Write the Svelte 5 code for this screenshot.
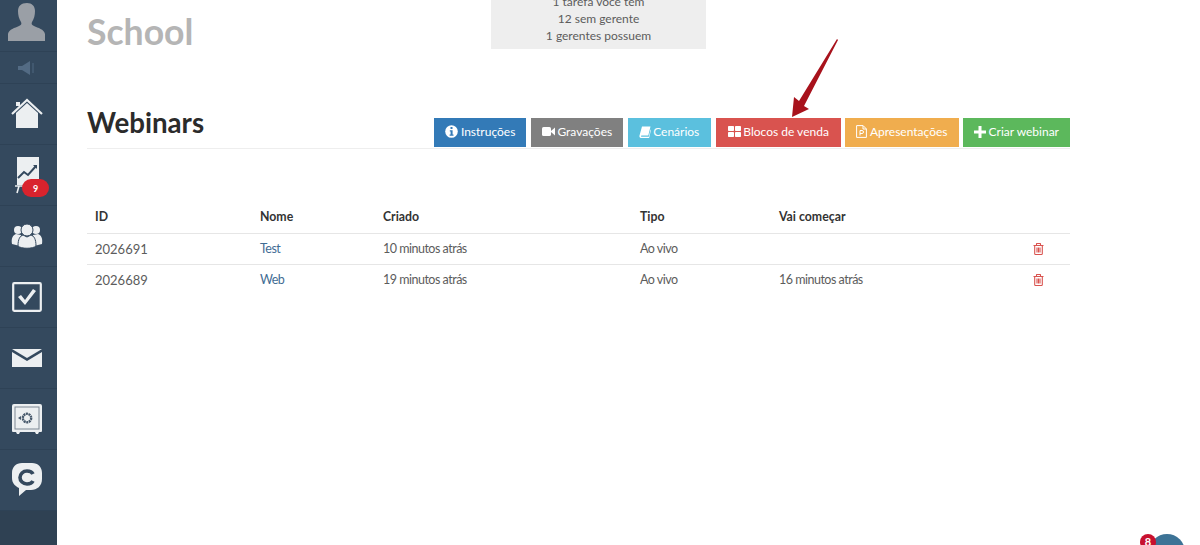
<script>
  const buttons = [
    { label: 'Instruções', cls: 'blue', icon: 'info' },
    { label: 'Gravações', cls: 'grey', icon: 'video' },
    { label: 'Cenários', cls: 'cyan', icon: 'book' },
    { label: 'Blocos de venda', cls: 'red', icon: 'grid' },
    { label: 'Apresentações', cls: 'orange', icon: 'file' },
    { label: 'Criar webinar', cls: 'green', icon: 'plus' }
  ];

  const rows = [
    { id: '2026691', name: 'Test', created: '10 minutos atrás', type: 'Ao vivo', start: '' },
    { id: '2026689', name: 'Web', created: '19 minutos atrás', type: 'Ao vivo', start: '16 minutos atrás' }
  ];
</script>

<div class="page">
  <aside class="sidebar">
    <div class="nav-item avatar">
      <svg width="40" height="40" viewBox="0 0 40 40" fill="#9a9fa6">
        <path d="M20 2c5 0 8 3 8 8 0 4-1 8-3 11-1 2 0 3 2 4 4 2 10 3 11 8v7H1v-7c1-5 7-6 11-8 2-1 3-2 2-4-2-3-3-7-3-11 0-5 3-8 9-8z" />
      </svg>
    </div>
    <div class="nav-item sound">
      <svg width="20" height="14" viewBox="0 0 20 14" fill="#536b84">
        <path d="M1 5h4l8-5v14l-8-5H1z" />
        <rect x="15" y="2" width="2" height="10" opacity="0.45" />
      </svg>
    </div>
    <div class="nav-item">
      <svg width="32" height="32" viewBox="0 0 32 32">
        <path d="M5 15 16 5l11 10v15H5z" fill="#eceff1" />
        <path d="M1 16 16 2l15 14" fill="none" stroke="#eceff1" stroke-width="2.2" />
        <path d="M5 4h4v4H5z" fill="#eceff1" />
      </svg>
    </div>
    <div class="nav-item chart">
      <svg width="26" height="38" viewBox="0 0 26 38">
        <path d="M3 1h22v28H3z" fill="#eceff1" />
        <path d="M4 22l6-6 4 3 8-9" fill="none" stroke="#34495e" stroke-width="2" />
        <path d="M19 9h4v4z" fill="#34495e" />
        <path d="M1 30h8M5 30l-2 7" stroke="#eceff1" stroke-width="1.6" fill="none" />
      </svg>
      <span class="badge">9</span>
    </div>
    <div class="nav-item">
      <svg width="32" height="28" viewBox="0 0 32 28" fill="#eceff1">
        <circle cx="7" cy="8" r="4" />
        <circle cx="25" cy="8" r="4" />
        <path d="M1 22c-1-6 1-9 4-10l5 1-1 11zM31 22c1-6-1-9-4-10l-5 1 1 11z" />
        <circle cx="16" cy="8" r="6" stroke="#34495e" />
        <path d="M7 24c0-7 2-10 5-11l4 2 4-2c3 1 5 4 5 11-3 3-15 3-18 0z" stroke="#34495e" />
      </svg>
    </div>
    <div class="nav-item">
      <svg width="30" height="30" viewBox="0 0 30 30">
        <rect x="1.2" y="1.2" width="27.6" height="27.6" rx="1" fill="none" stroke="#eceff1" stroke-width="2.2" />
        <path d="M6 15l3-2 4 5 8-11 3 2-11 14z" fill="#eceff1" />
      </svg>
    </div>
    <div class="nav-item">
      <svg width="30" height="18" viewBox="0 0 30 18" fill="#eceff1">
        <path d="M0 0h30L15 9z" />
        <path d="M0 3l15 9 15-9v15H0z" />
      </svg>
    </div>
    <div class="nav-item">
      <svg width="30" height="30" viewBox="0 0 30 30">
        <path d="M2 0h26a2 2 0 0 1 2 2v25a1 1 0 0 1-1 1h-2l-1 2h-2l-1-2H8l-1 2H5l-1-2H1a1 1 0 0 1-1-1V2a2 2 0 0 1 2-2z" fill="#eceff1" />
        <rect x="3" y="3" width="24" height="22" fill="none" stroke="#7c8894" stroke-width="1" />
        <circle cx="15" cy="14" r="4.2" fill="none" stroke="#46586b" stroke-width="2.4" stroke-dasharray="2 0.6" />
        <path d="M6 14l3-2v4z" fill="#46586b" />
      </svg>
    </div>
    <div class="nav-item">
      <svg width="30" height="34" viewBox="0 0 30 34">
        <path d="M10 0h10c6 0 10 4 10 10v6c0 7-5 11-11 11h-5l-7 6 0-8c-4-2-7-5-7-10v-5C0 4 4 0 10 0z" fill="#eceff1" />
        <path d="M21 11c-1-2-3-3-6-3-4 0-7 3-7 6.500s3 6.500 7 6.500c3 0 5-1 6-3" fill="none" stroke="#34495e" stroke-width="3.600" />
      </svg>
    </div>
    <div class="sidebar-foot"></div>
  </aside>

  <main class="content">
    <div class="top">
      <h1 class="school">School</h1>
      <div class="notice">
        <span>1 tarefa você tem</span>
        <span>12 sem gerente</span>
        <span>1 gerentes possuem</span>
      </div>
    </div>

    <div class="heading">
      <h2>Webinars</h2>
      <div class="actions">
        {#each buttons as b}
          <button class="btn {b.cls}">
            {#if b.icon === 'info'}
              <svg width="13" height="13" viewBox="0 0 13 13"><circle cx="6.500" cy="6.500" r="6.300" fill="#fff" /><path d="M5.500 2h2v2h-2zM4.800 5.200h2.800v4.300h.9v1.300H4.600V9.500h1V6.500h-.8z" fill="#337ab7" /></svg>
            {:else if b.icon === 'video'}
              <svg width="13" height="11" viewBox="0 0 13 11" fill="#fff"><rect x="0" y="1" width="9" height="9" rx="1.600" /><path d="M9 5l4-3.500v8L9 6z" /></svg>
            {:else if b.icon === 'book'}
              <svg width="12" height="12" viewBox="0 0 12 12" fill="#fff"><path d="M3 .5h8.500L9.300 9.500H2.600c-.8 0-.9 1.300 0 1.300h7.200l1.800-7.300.4.400-1.900 8H2C.5 11.900.2 10.600.5 9.500z" /></svg>
            {:else if b.icon === 'grid'}
              <svg width="13" height="11" viewBox="0 0 13 11" fill="#fff"><rect width="6" height="5" rx=".7" /><rect x="7" width="6" height="5" rx=".7" /><rect y="6" width="6" height="5" rx=".7" /><rect x="7" y="6" width="6" height="5" rx=".7" /></svg>
            {:else if b.icon === 'file'}
              <svg width="11" height="13" viewBox="0 0 11 13" fill="none" stroke="#fff"><path d="M.6.600h6.500l3.300 3.300v8.500H.6z" /><path d="M7 .8v3.200h3.200" /><path d="M4 10.500V5.500h2a1.500 1.500 0 0 1 0 3H4" /></svg>
            {:else}
              <svg width="12" height="12" viewBox="0 0 12 12" fill="#fff"><path d="M4.500 0h3v4.500H12v3H7.500V12h-3V7.500H0v-3h4.500z" /></svg>
            {/if}
            {b.label}
          </button>
        {/each}
      </div>
    </div>

    <div class="table">
      <div class="row head">
        <div>ID</div>
        <div>Nome</div>
        <div>Criado</div>
        <div>Tipo</div>
        <div>Vai começar</div>
        <div></div>
      </div>
      {#each rows as r}
        <div class="row">
          <div class="num">{r.id}</div>
          <div class="link">{r.name}</div>
          <div>{r.created}</div>
          <div>{r.type}</div>
          <div>{r.start}</div>
          <div class="trash">
            <svg width="11" height="12" viewBox="0 0 11 12" fill="none" stroke="#d9534f" stroke-width="1.100">
              <path d="M.5 2.500h10M3.500 2.500V1a.5.500 0 0 1 .5-.5h3a.5.500 0 0 1 .5.500v1.500M1.700 2.500v8.200c0 .4.300.8.800.8h6c.5 0 .8-.4.800-.8V2.500M4 4.500v5M5.500 4.500v5M7 4.500v5" />
            </svg>
          </div>
        </div>
      {/each}
    </div>
  </main>

  <svg class="arrow" width="60" height="90" viewBox="0 0 60 90">
    <path d="M50 2 51 3 17 69 22 72 5 80 7 60 12 64z" fill="#a8121c" />
  </svg>

  <div class="chat">
    <span class="chat-badge">8</span>
  </div>
</div>

<style>
  :global(body) {
    margin: 0;
    background: #fff;
  }

  .page {
    position: relative;
    display: flex;
    height: 545px;
    overflow: hidden;
    font-family: Lato, "Open Sans", sans-serif;
    font-size: 12.5px;
    letter-spacing: -0.5px;
    color: #5c5c5c;
  }

  .sidebar {
    width: 57px;
    flex-shrink: 0;
    display: flex;
    flex-direction: column;
    background: #34495e;
  }

  .nav-item {
    position: relative;
    flex-shrink: 0;
    display: flex;
    align-items: center;
    justify-content: center;
    border-bottom: 1px solid #2e4256;
    box-sizing: border-box;
    height: 61px;
    padding-right: 3px;
  }

  .avatar {
    height: 52px;
    align-items: flex-start;
    padding-top: 1px;
  }

  .sound {
    height: 32px;
  }

  .badge {
    position: absolute;
    left: 22px;
    top: 34px;
    width: 27px;
    height: 18px;
    border-radius: 9px;
    background: #d9232d;
    color: #fff;
    font-size: 9px;
    font-weight: 700;
    letter-spacing: 0;
    display: flex;
    align-items: center;
    justify-content: center;
  }

  .sidebar-foot {
    flex: 1;
    background: #2f4153;
  }

  .content {
    width: 983px;
    margin-left: 30px;
  }

  .top {
    display: grid;
    grid-template-columns: 404px 215px;
    height: 104px;
  }

  .school {
    margin: 12px 0 0;
    font-size: 35.6px;
    line-height: 40px;
    font-weight: 700;
    letter-spacing: 0;
    color: #b5b5b5;
  }

  .notice {
    height: 49px;
    background: #eeeeee;
    display: flex;
    flex-direction: column;
    justify-content: flex-end;
    align-items: center;
    padding-bottom: 5px;
    box-sizing: border-box;
    overflow: hidden;
    font-size: 12px;
    line-height: 17px;
    letter-spacing: 0;
  }

  .heading {
    display: flex;
    justify-content: space-between;
    align-items: flex-end;
    height: 44px;
    border-bottom: 1px solid #eee;
  }

  h2 {
    margin: 0 0 7px;
    font-size: 27.7px;
    line-height: 36px;
    font-weight: 700;
    letter-spacing: 0;
    color: #2b2b2b;
  }

  .actions {
    display: flex;
    gap: 4.5px;
    margin-bottom: 1px;
  }

  .btn {
    height: 29px;
    padding: 0 11px 2px;
    border: 0;
    display: flex;
    align-items: center;
    gap: 2.5px;
    color: #fff;
    font-family: inherit;
    font-size: 12px;
    letter-spacing: 0;
  }

  .blue { background: #337ab7; }
  .grey { background: #808080; }
  .cyan { background: #5bc0de; padding-right: 12px; }
  .red { background: #d9534f; padding-left: 12px; padding-right: 12px; }
  .orange { background: #f0ad4e; }
  .green { background: #5cb85c; }

  .table {
    margin-top: 51px;
  }

  .row {
    display: grid;
    grid-template-columns: 165px 123px 257px 139px 1fr 37px;
    box-sizing: border-box;
    height: 31px;
    align-items: center;
    border-top: 1px solid #e6e6e6;
    padding: 0 0 1px 8px;
  }

  .row.head {
    border-top: 0;
    height: 33px;
    padding-bottom: 0;
    font-size: 12.3px;
    letter-spacing: 0;
    font-weight: 700;
    color: #333;
  }

  .num {
    font-size: 13px;
    letter-spacing: 0;
  }

  .link {
    color: #3f6c94;
  }

  .trash {
    display: flex;
  }

  .arrow {
    position: absolute;
    left: 787px;
    top: 37px;
  }

  .chat {
    position: absolute;
    left: 1149px;
    top: 534px;
    width: 36px;
    height: 36px;
    border-radius: 50%;
    background: #3d7396;
  }

  .chat-badge {
    position: absolute;
    left: -9px;
    top: 0;
    width: 16px;
    height: 16px;
    border-radius: 50%;
    background: #c8102e;
    color: #fff;
    font-size: 11px;
    font-weight: 700;
    letter-spacing: 0;
    text-align: center;
    line-height: 15px;
  }
</style>
